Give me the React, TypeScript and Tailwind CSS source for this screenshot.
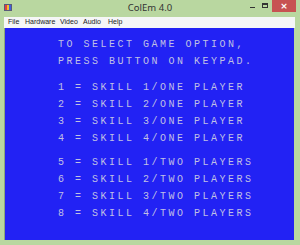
import React from 'react';

const lines1 = ['TO SELECT GAME OPTION,', 'PRESS BUTTON ON KEYPAD.'];
const lines2 = [
  '1 = SKILL 1/ONE PLAYER',
  '2 = SKILL 2/ONE PLAYER',
  '3 = SKILL 3/ONE PLAYER',
  '4 = SKILL 4/ONE PLAYER',
];
const lines3 = [
  '5 = SKILL 1/TWO PLAYERS',
  '6 = SKILL 2/TWO PLAYERS',
  '7 = SKILL 3/TWO PLAYERS',
  '8 = SKILL 4/TWO PLAYERS',
];

const AppIcon = () => (
  <svg width="8" height="7" viewBox="0 0 8 7" className="block">
    <rect x="0" y="0" width="8" height="7" fill="#5a5a7a" />
    <rect x="1" y="1" width="2" height="5" fill="#e04040" />
    <rect x="3" y="1" width="2" height="5" fill="#f0c030" />
    <rect x="5" y="1" width="2" height="5" fill="#4060e0" />
  </svg>
);

const Line = ({ text }: { text: string }) => (
  <div className="h-[17px] leading-[17px] whitespace-pre">{text}</div>
);

export default function App() {
  return (
    <div className="w-[300px] h-[245px] bg-[#b9d7a0] flex flex-col overflow-hidden">
      {/* Title bar */}
      <div className="h-[17px] flex items-start relative shrink-0">
        <div className="pl-[4px] pt-[4px]">
          <AppIcon />
        </div>
        <div
          className="absolute left-0 right-0 top-0 h-[16px] flex items-center justify-center text-[9.5px] text-[#333]"
          style={{ fontFamily: '"Noto Sans", sans-serif' }}
        >
          ColEm 4.0
        </div>
        <div className="ml-auto flex items-start h-[12px]">
          <div className="w-[11px] h-[12px] flex items-center justify-center mr-[1px]">
            <div className="w-[5px] h-[1px] bg-[#333] mt-[3px]" />
          </div>
          <div className="w-[11px] h-[12px] flex items-center justify-center mr-[2px]">
            <div className="w-[6px] h-[5px] border border-[#333] border-t-2 -mt-[2px]" />
          </div>
          <div className="w-[24px] h-[12px] bg-[#c75252] flex items-center justify-center mr-[4px] text-white text-[9px] leading-none font-bold"
            style={{ fontFamily: '"DejaVu Sans", sans-serif' }}>
            ×
          </div>
        </div>
      </div>
      {/* Menu bar */}
      <div
        className="ml-[4px] mr-[5px] h-[11px] bg-[#f5f6f7] flex items-center pl-[4px] text-[7px] text-[#222] shrink-0"
        style={{ fontFamily: '"Liberation Sans", sans-serif' }}
      >
        <span className="w-[17px] shrink-0">File</span>
        <span className="w-[35px] shrink-0">Hardware</span>
        <span className="w-[23px] shrink-0">Video</span>
        <span className="w-[25px] shrink-0">Audio</span>
        <span>Help</span>
      </div>
      {/* Screen */}
      <div
        className="ml-[4px] mr-[6px] h-[212px] bg-[#2222f4] border-l border-[#8aa87a] pl-[53px] pt-[8px] text-[10px] tracking-[2.5px] text-[#c0c0e4]"
        style={{ fontFamily: '"Liberation Mono", monospace' }}
      >
        {lines1.map((t) => (
          <Line key={t} text={t} />
        ))}
        <div className="h-[9px]" />
        {lines2.map((t) => (
          <Line key={t} text={t} />
        ))}
        <div className="h-[7px]" />
        {lines3.map((t) => (
          <Line key={t} text={t} />
        ))}
      </div>
    </div>
  );
}
